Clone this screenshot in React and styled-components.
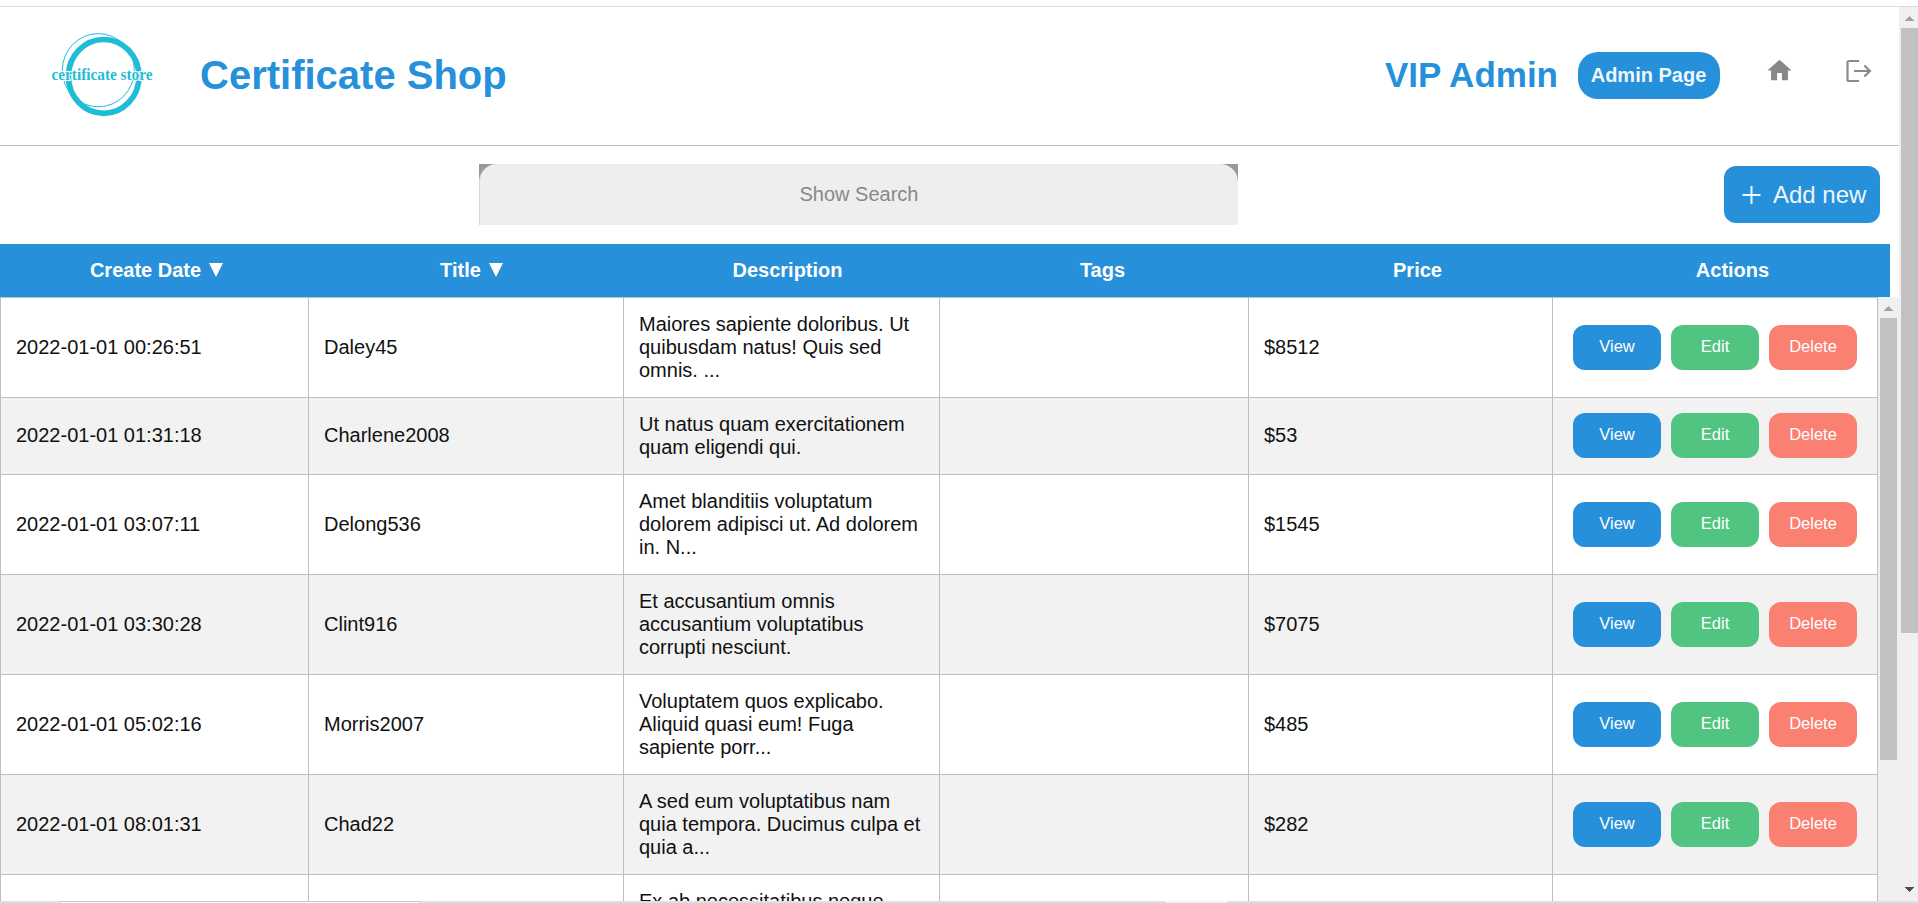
import React from "react";
import styled, { createGlobalStyle, css } from "styled-components";

const BLUE = "#2790da";

const GlobalStyle = createGlobalStyle`
  * { box-sizing: border-box; }
  body { margin: 0; background: #fff; overflow: hidden; font-family: Arial, "Liberation Sans", sans-serif; }
`;

const Shell = styled.div`
  display: flex;
  flex-direction: column;
  width: 1918px;
  height: 903px;
  padding-top: 6px;
  overflow: hidden;
`;
const Viewport = styled.div`
  display: flex;
  height: 895px;
  border-top: 1px solid #dcdcdc;
`;
const Page = styled.div`
  display: flex;
  flex-direction: column;
  width: 1899px;
  flex: none;
  overflow: hidden;
`;
const Header = styled.header`
  display: flex;
  align-items: flex-start;
  flex: none;
  height: 139px;
  border-bottom: 1px solid #bfbfbf;
  padding-left: 46px;
`;
const Logo = styled.svg`
  width: 110px;
  height: 100px;
  margin-top: 20px;
`;
const Brand = styled.h1`
  margin: 45px auto 0 44px;
  font-size: 40px;
  line-height: 46px;
  color: ${BLUE};
`;
const UserName = styled.div`
  margin: 47px 20px 0 0;
  font-size: 35px;
  font-weight: bold;
  line-height: 42px;
  color: ${BLUE};
`;
const AdminButton = styled.button`
  width: 142px;
  height: 47px;
  margin-top: 45px;
  padding: 0 1px 0 0;
  border: 0;
  border-radius: 20px;
  background: ${BLUE};
  color: #eef6fc;
  font: bold 20px Arial, "Liberation Sans", sans-serif;
  white-space: nowrap;
`;
const HeaderIcon = styled.svg`
  width: 29px;
  height: 29px;
  margin: 49px ${(p) => p.$right}px 0 ${(p) => p.$left}px;
`;

const Toolbar = styled.div`
  display: flex;
  flex: none;
  height: 98px;
  padding: 18px 19px 0 479px;
  justify-content: space-between;
`;
const SearchPanel = styled.div`
  width: 759px;
  height: 61px;
  background: linear-gradient(#999 20px, #eee 20px);
`;
const SearchToggle = styled.button`
  display: block;
  width: 100%;
  height: 61px;
  padding: 0 0 1px;
  border: 0;
  border-left: 1px solid #d8d8d8;
  border-radius: 18px 18px 0 0;
  background: #eee;
  color: #888;
  font: 20px Arial, "Liberation Sans", sans-serif;
`;
const AddButton = styled.button`
  display: flex;
  align-items: center;
  width: 156px;
  height: 57px;
  margin-top: 2px;
  padding: 0 0 0 15px;
  gap: 8px;
  border: 0;
  border-radius: 12px;
  background: ${BLUE};
  color: #eef6fc;
  font: 24px Arial, "Liberation Sans", sans-serif;
  white-space: nowrap;
`;

const HeadRow = styled.div`
  display: grid;
  grid-template-columns: repeat(6, 315px);
  flex: none;
  width: 1890px;
  height: 53px;
  background: ${BLUE};
`;
const HeadCell = styled.div`
  display: flex;
  align-items: center;
  justify-content: center;
  gap: 8px;
  color: #fff;
  font-size: 20px;
  font-weight: bold;
`;
const SortArrow = styled.svg`
  width: 14px;
  height: 14px;
  margin: 0 2px 1px 0;
`;
const TableArea = styled.div`
  display: flex;
  flex: 1;
  min-height: 0;
`;
const Rows = styled.div`
  width: 1878px;
  flex: none;
  border-top: 1px solid #bfbfbf;
  border-left: 1px solid #bfbfbf;
  overflow: hidden;
`;
const Row = styled.div`
  display: grid;
  grid-template-columns: 308px 315px 316px 309px 304px 325px;
  height: ${(p) => p.$h}px;
  background: ${(p) => (p.$odd ? "#f2f2f2" : "#fff")};
`;
const Cell = styled.div`
  display: flex;
  align-items: center;
  padding: 0 15px ${(p) => (p.$raised ? 2 : 0)}px;
  border-right: 1px solid #bfbfbf;
  border-bottom: 1px solid #bfbfbf;
  font-size: 20px;
  line-height: 23px;
  color: #111;
`;
const Lines = styled.div`
  height: ${(p) => p.$count * 23}px;
  white-space: pre;
`;
const ActionCell = styled(Cell)`
  gap: 10px;
  padding: 0 0 1px 20px;
`;
const ActionButton = styled.button`
  width: 88px;
  height: 45px;
  padding: 0 0 2px;
  border: 0;
  border-radius: 12px;
  background: ${(p) => p.$color};
  color: #fff;
  font: 16.5px Arial, "Liberation Sans", sans-serif;
`;

const Track = styled.div`
  display: flex;
  flex-direction: column;
  align-items: flex-start;
  flex: none;
  width: 21px;
  padding-left: 2px;
  background: #f0f0f0;
`;
const ArrowBox = styled.svg`
  width: 17px;
  height: 21px;
  flex: none;
  ${(p) => p.$end && css`margin-top: auto;`}
`;
const Thumb = styled.div`
  width: 17px;
  height: ${(p) => p.$h}px;
  background: #c1c1c1;
`;

const Taskbar = styled.div`
  display: flex;
  height: 2px;
  flex: none;
  background: #d3e4ed;
`;
const TaskPreview = styled.div`
  width: 360px;
  margin-left: 60px;
  border: 1px solid #c8c8c8;
  border-bottom: 0;
  background: #fff;
`;
const TaskItem = styled.div`
  width: 61px;
  margin-left: 746px;
  background: #f1f5f7;
`;

const UpArrow = () => (
  <ArrowBox viewBox="0 0 17 21" shapeRendering="crispEdges">
    <path d="M4 14L8.5 9L13 14z" fill="#a3a3a3" />
  </ArrowBox>
);
const DownArrow = () => (
  <ArrowBox $end viewBox="0 0 17 21" shapeRendering="crispEdges">
    <path d="M4 7L8.5 12L13 7z" fill="#505050" />
  </ArrowBox>
);
const SortMark = () => (
  <SortArrow viewBox="0 0 14 14">
    <path d="M0 0H14L7 14z" fill="#fff" />
  </SortArrow>
);

const certificates = [
  { date: "2022-01-01 00:26:51", title: "Daley45", text: "Maiores sapiente doloribus. Ut\nquibusdam natus! Quis sed\nomnis. ...", price: "$8512", lines: 3 },
  { date: "2022-01-01 01:31:18", title: "Charlene2008", text: "Ut natus quam exercitationem\nquam eligendi qui.", price: "$53", lines: 2 },
  { date: "2022-01-01 03:07:11", title: "Delong536", text: "Amet blanditiis voluptatum\ndolorem adipisci ut. Ad dolorem\nin. N...", price: "$1545", lines: 3 },
  { date: "2022-01-01 03:30:28", title: "Clint916", text: "Et accusantium omnis\naccusantium voluptatibus\ncorrupti nesciunt.", price: "$7075", lines: 3 },
  { date: "2022-01-01 05:02:16", title: "Morris2007", text: "Voluptatem quos explicabo.\nAliquid quasi eum! Fuga\nsapiente porr...", price: "$485", lines: 3 },
  { date: "2022-01-01 08:01:31", title: "Chad22", text: "A sed eum voluptatibus nam\nquia tempora. Ducimus culpa et\nquia a...", price: "$282", lines: 3 },
  { date: "", title: "", text: "Ex ab necessitatibus neque", price: "", lines: 3, cut: true },
];

export default function App() {
  return (
    <Shell>
      <GlobalStyle />
      <Viewport>
        <Page>
          <Header>
            <Logo viewBox="0 0 110 100">
              <ellipse cx="52.3" cy="43.2" rx="36" ry="36.6" fill="none" stroke="#1fbcd8" strokeWidth="1" />
              <ellipse cx="57.700" cy="49.400" rx="35.300" ry="36.900" fill="none" stroke="#1fbcd8" strokeWidth="5.700" />
              <text x="5.5" y="53" textLength="101" lengthAdjust="spacingAndGlyphs" fontFamily="Liberation Serif, serif" fontWeight="bold" fontSize="17.5" fill="#1fbcd8" stroke="#fff" strokeWidth="2" paintOrder="stroke">certificate store</text>
            </Logo>
            <Brand>Certificate Shop</Brand>
            <UserName>VIP Admin</UserName>
            <AdminButton>Admin Page</AdminButton>
            <HeaderIcon $left={44.5} $right={0} viewBox="0 0 24 24" fill="#8a8787">
              <path d="M10 20v-6h4v6h5v-8h3L12 3 2 12h3v8z" />
            </HeaderIcon>
            <HeaderIcon $left={50.5} $right={26} viewBox="0 0 29 29" fill="none" stroke="#8c8a8a" strokeWidth="2.2">
              <path d="M15 5H5Q3.500 5 3.500 6.500V23.500Q3.500 25 5 25H15M10 15H26.500M20.300 9.500L26 15L20.300 20.500" />
            </HeaderIcon>
          </Header>
          <Toolbar>
            <SearchPanel>
              <SearchToggle>Show Search</SearchToggle>
            </SearchPanel>
            <AddButton>
              <svg width="26" height="26" viewBox="0 0 26 26" stroke="#eef6fc" strokeWidth="2">
                <path d="M3.500 13H21.500M12.500 4V22" />
              </svg>
              Add new
            </AddButton>
          </Toolbar>
          <HeadRow>
            <HeadCell>Create Date <SortMark /></HeadCell>
            <HeadCell>Title <SortMark /></HeadCell>
            <HeadCell>Description</HeadCell>
            <HeadCell>Tags</HeadCell>
            <HeadCell>Price</HeadCell>
            <HeadCell>Actions</HeadCell>
          </HeadRow>
          <TableArea>
            <Rows>
              {certificates.map((c, i) => (
                <Row key={i} $h={c.lines === 2 ? 77 : 100} $odd={i % 2 === 1}>
                  <Cell $raised={c.lines === 2}>{c.date}</Cell>
                  <Cell $raised={c.lines === 2}>{c.title}</Cell>
                  <Cell><Lines $count={c.lines}>{c.text}</Lines></Cell>
                  <Cell />
                  <Cell $raised={c.lines === 2}>{c.price}</Cell>
                  <ActionCell>
                    {!c.cut && (
                      <>
                        <ActionButton $color={BLUE}>View</ActionButton>
                        <ActionButton $color="#52c482">Edit</ActionButton>
                        <ActionButton $color="#fa8072">Delete</ActionButton>
                      </>
                    )}
                  </ActionCell>
                </Row>
              ))}
            </Rows>
            <Track>
              <UpArrow />
              <Thumb $h={442} />
            </Track>
          </TableArea>
        </Page>
        <Track>
          <UpArrow />
          <Thumb $h={605} />
          <DownArrow />
        </Track>
      </Viewport>
      <Taskbar>
        <TaskPreview />
        <TaskItem />
      </Taskbar>
    </Shell>
  );
}
